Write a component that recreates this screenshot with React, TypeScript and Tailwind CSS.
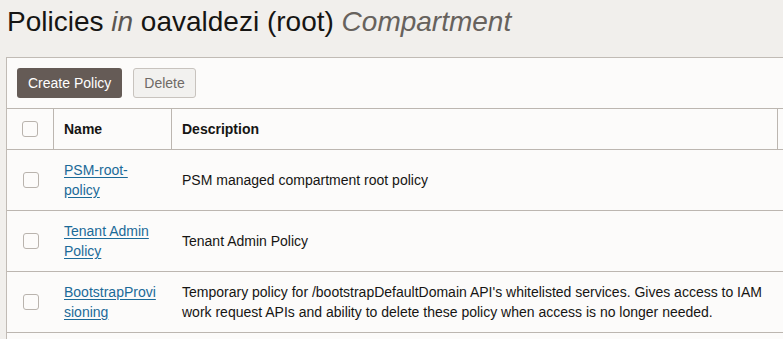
const ROWS = [
  { name: "PSM-root-policy", desc: "PSM managed compartment root policy" },
  { name: "Tenant Admin Policy", desc: "Tenant Admin Policy" },
  {
    name: "BootstrapProvisioning",
    desc: "Temporary policy for /bootstrapDefaultDomain API's whitelisted services. Gives access to IAM work request APIs and ability to delete these policy when access is no longer needed.",
  },
];

function Checkbox() {
  return <div className="w-4 h-4 rounded-[3px] border border-[#b9b3ad] bg-[#fcfbfa]" />;
}

export default function App() {
  return (
    <div className="w-[783px] h-[339px] overflow-hidden bg-[#f1efec] text-[#161513] font-['Liberation_Sans',Arial,sans-serif]">
      <h1 className="h-[57px] pl-[7px] pt-[5px] text-[28px] leading-[34px] whitespace-nowrap">
        Policies <i className="text-[#5b5651]">in</i> oavaldezi (root){" "}
        <i className="text-[#67625d]">Compartment</i>
      </h1>

      <div className="ml-[6px] w-[900px] h-[300px] border-l border-t border-[#c1bbb5] bg-[#fcfbfa]">
        <div className="flex gap-[11px] px-[10px] py-[10px]">
          <button className="h-[30px] px-[11px] rounded-[3px] bg-[#655b56] text-white text-[14px]">
            Create Policy
          </button>
          <button className="h-[30px] px-[10px] rounded-[3px] border border-[#c8c3be] bg-[#f2f1ef] text-[#6f6a66] text-[14px]">
            Delete
          </button>
        </div>

        <div className="flex h-[42px] border-y border-[#bcb6b0] text-[14px] font-bold">
          <div className="w-[47px] flex items-center justify-center border-r border-[#bcb6b0]">
            <Checkbox />
          </div>
          <div className="w-[118px] flex items-center pl-[10px] border-r border-[#bcb6b0]">Name</div>
          <div className="w-[606px] flex items-center pl-[10px] border-r border-[#bcb6b0]">Description</div>
          <div className="flex-1" />
        </div>

        {ROWS.map((r) => (
          <div key={r.name} className="flex h-[61px] border-b border-[#bcb6b0] text-[14px] leading-[20px]">
            <div className="w-[47px] flex items-center justify-center">
              <Checkbox />
            </div>
            <div className="w-[118px] flex items-center px-[10px]">
              <a className="text-[#1b6a98] underline underline-offset-2 [overflow-wrap:anywhere]">{r.name}</a>
            </div>
            <div className="w-[606px] flex items-center px-[10px]">{r.desc}</div>
          </div>
        ))}
      </div>
    </div>
  );
}
